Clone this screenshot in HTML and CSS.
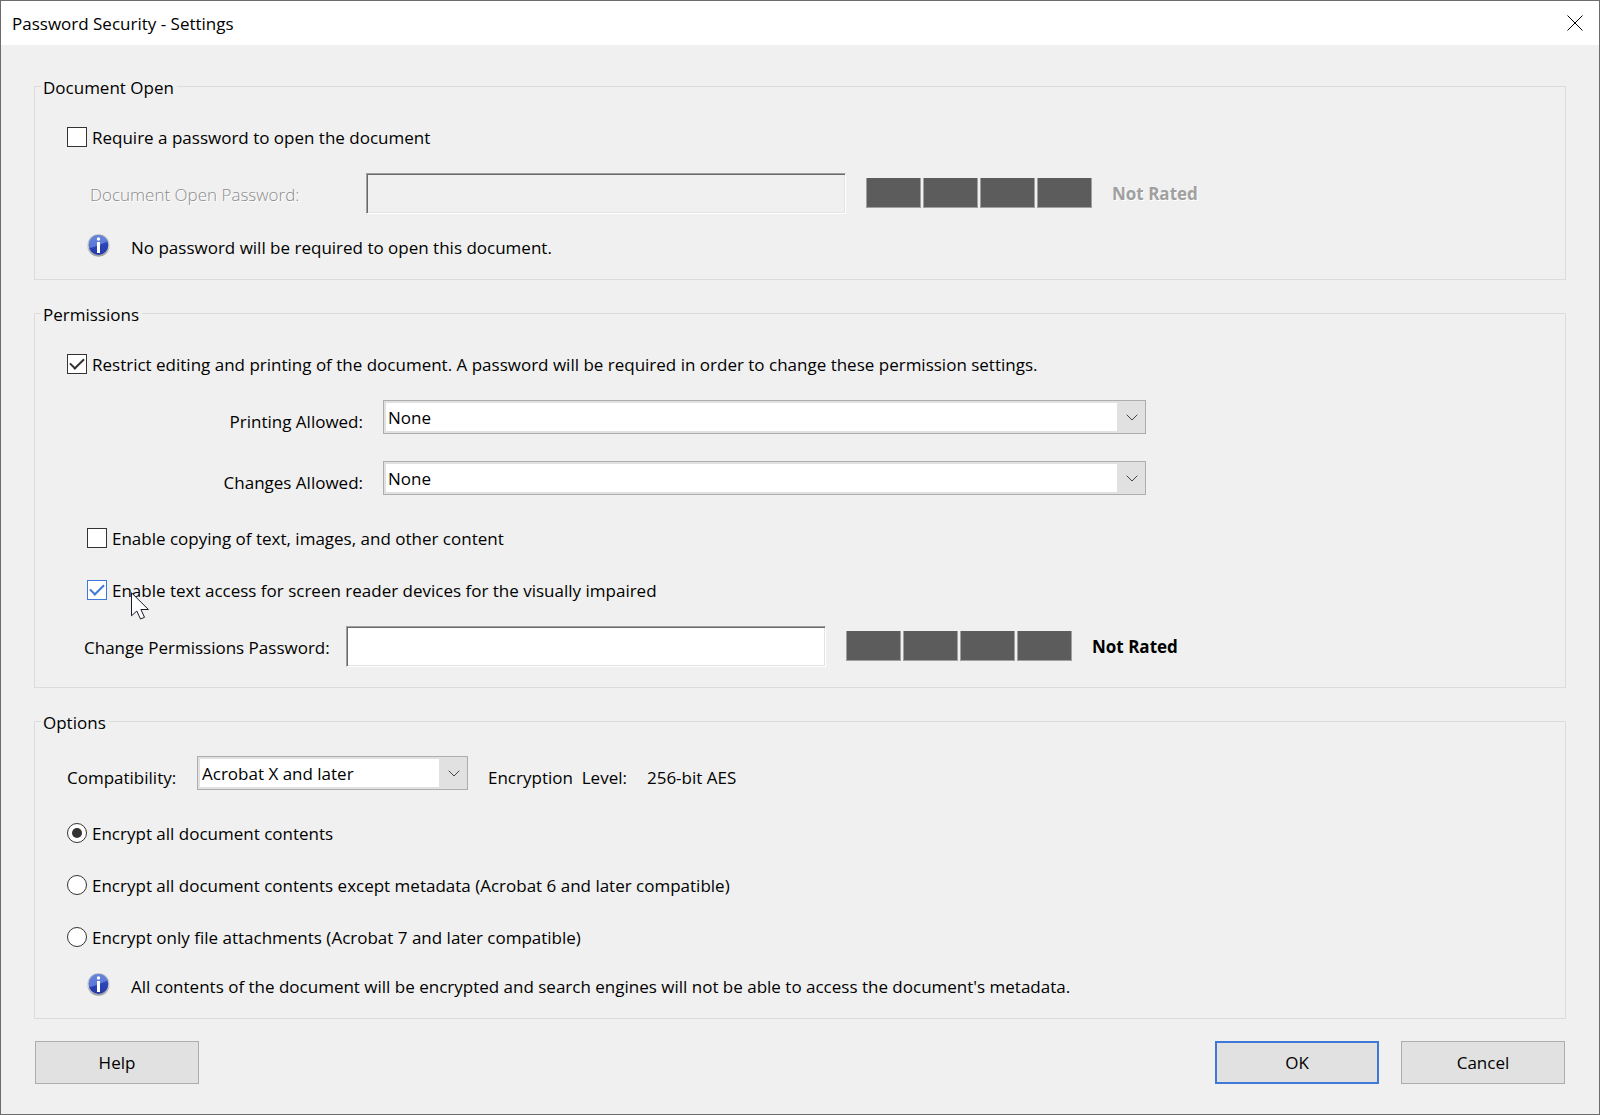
FILE: index.html
```html
<!DOCTYPE html>
<html lang="en">
<head>
    <meta charset="UTF-8">
    <meta name="viewport" content="width=device-width, initial-scale=1.0">
    <title>Password Security - Settings</title>
    <link rel="stylesheet" href="styles.css">
</head>
<body>
    <!-- shared gradients for the info icons -->
    <svg class="defs" width="0" height="0" aria-hidden="true">
        <defs>
            <linearGradient id="ring" x1="0" y1="0" x2="0" y2="1">
                <stop offset="0" stop-color="#b4b4b4"/>
                <stop offset="0.5" stop-color="#d8d8d8"/>
                <stop offset="1" stop-color="#9a9a9a"/>
            </linearGradient>
            <linearGradient id="ball" x1="0" y1="0" x2="0" y2="1">
                <stop offset="0" stop-color="#3f5fc6"/>
                <stop offset="0.5" stop-color="#2b46b4"/>
                <stop offset="1" stop-color="#2438ae"/>
            </linearGradient>
            <symbol id="info" viewBox="0 0 24 24">
                <circle cx="11.500" cy="12.500" r="11.300" fill="url(#ring)"/>
                <circle cx="11.500" cy="12" r="9.900" fill="url(#ball)"/>
                <path d="M1.900 13a9.600 9.600 0 0 1 18.600-4.500C16 10 9 14 2.600 15z" fill="#7f9cf0" opacity="0.6"/>
                <circle cx="11.500" cy="6" r="1.700" fill="#fff"/>
                <rect x="10" y="9" width="3" height="11" fill="#fff"/>
            </symbol>
        </defs>
    </svg>

    <form class="dialog">
        <header class="title-bar">
            <h1>Password Security - Settings</h1>
            <button type="button" class="close" aria-label="Close">
                <svg width="16" height="16" viewBox="0 0 16 16"><path d="M.5.5l15 15M15.500.5l-15 15" stroke="#000"/></svg>
            </button>
        </header>

        <main class="content">
            <fieldset class="group">
                <legend>Document Open</legend>
                <div class="check-row">
                    <input type="checkbox" id="requireOpen">
                    <label for="requireOpen">Require a password to open the document</label>
                </div>
                <div class="password-row open-password">
                    <label for="openPassword" class="disabled">Document Open Password:</label>
                    <input type="password" id="openPassword" disabled>
                    <div class="meter"><span></span><span></span><span></span><span></span></div>
                    <strong class="disabled">Not Rated</strong>
                </div>
                <div class="info-row">
                    <svg width="24" height="24" aria-hidden="true"><use href="#info"/></svg>
                    <p>No password will be required to open this document.</p>
                </div>
            </fieldset>

            <fieldset class="group">
                <legend>Permissions</legend>
                <div class="check-row">
                    <input type="checkbox" id="restrict" checked>
                    <label for="restrict">Restrict editing and printing of the document. A password will be required in order to change these permission settings.</label>
                </div>
                <div class="select-row allowed">
                    <label for="printing">Printing Allowed:</label>
                    <div class="select">
                        <select id="printing"><option>None</option></select>
                        <svg width="12" height="7" viewBox="0 0 12 7"><path d="M.7.7L6 6 11.300.7"/></svg>
                    </div>
                </div>
                <div class="select-row allowed">
                    <label for="changes">Changes Allowed:</label>
                    <div class="select">
                        <select id="changes"><option>None</option></select>
                        <svg width="12" height="7" viewBox="0 0 12 7"><path d="M.7.7L6 6 11.300.7"/></svg>
                    </div>
                </div>
                <div class="check-row first indent">
                    <input type="checkbox" id="copying">
                    <label for="copying">Enable copying of text, images, and other content</label>
                </div>
                <div class="check-row indent">
                    <input type="checkbox" id="reader" class="hot" checked>
                    <label for="reader">Enable text access for screen reader devices for the visually impaired</label>
                    <svg class="cursor" width="19" height="28" viewBox="0 0 19 28" aria-hidden="true">
                        <path d="M.5.8v23l5.300-4.800 3.700 8 4-1.700-3.600-7.800h7.500z" fill="#fff" stroke="#1a1a2a"/>
                    </svg>
                </div>
                <div class="password-row change-password">
                    <label for="changePassword">Change Permissions Password:</label>
                    <input type="password" id="changePassword">
                    <div class="meter"><span></span><span></span><span></span><span></span></div>
                    <strong>Not Rated</strong>
                </div>
            </fieldset>

            <fieldset class="group options">
                <legend>Options</legend>
                <div class="select-row compat">
                    <label for="compatibility">Compatibility:</label>
                    <div class="select">
                        <select id="compatibility"><option>Acrobat X and later</option></select>
                        <svg width="12" height="7" viewBox="0 0 12 7"><path d="M.7.7L6 6 11.300.7"/></svg>
                    </div>
                    <span class="level">Encryption&nbsp; Level:</span>
                    <span class="level">256-bit AES</span>
                </div>
                <div class="check-row first">
                    <input type="radio" name="encrypt" id="encryptAll" checked>
                    <label for="encryptAll">Encrypt all document contents</label>
                </div>
                <div class="check-row">
                    <input type="radio" name="encrypt" id="encryptExcept">
                    <label for="encryptExcept">Encrypt all document contents except metadata (Acrobat 6 and later compatible)</label>
                </div>
                <div class="check-row">
                    <input type="radio" name="encrypt" id="encryptFiles">
                    <label for="encryptFiles">Encrypt only file attachments (Acrobat 7 and later compatible)</label>
                </div>
                <div class="info-row">
                    <svg width="24" height="24" aria-hidden="true"><use href="#info"/></svg>
                    <p>All contents of the document will be encrypted and search engines will not be able to access the document's metadata.</p>
                </div>
            </fieldset>
        </main>

        <footer class="buttons">
            <button type="button">Help</button>
            <button type="submit" class="default">OK</button>
            <button type="button">Cancel</button>
        </footer>
    </form>
</body>
</html>
```
FILE: styles.css
```css
* {
    box-sizing: border-box;
}
body {
    margin: 0;
    font-family: "Segoe UI", "Open Sans", "Noto Sans", sans-serif;
    font-size: 17px;
    line-height: 22px;
    color: #000;
    background-color: #f0f0f0;
}
input, select, button {
    font: inherit;
    color: inherit;
    margin: 0;
}
label, p, h1 {
    margin: 0;
    padding-top: 2px;
}
.defs {
    position: absolute;
}
.dialog {
    min-height: 100vh;
    border: 1px solid #6c6c6c;
}

/* title bar */
.title-bar {
    display: flex;
    align-items: center;
    justify-content: space-between;
    height: 44px;
    padding: 0 16px 0 11px;
    background-color: #fff;
}
h1 {
    font-size: 17px;
    font-weight: normal;
}
.close {
    display: flex;
    padding: 0;
    border: none;
    background: none;
}

/* groups */
.content {
    display: flex;
    flex-direction: column;
    gap: 21px;
    padding: 29px 33px 0;
}
.group {
    min-width: 0;
    margin: 0;
    padding: 26px 32px 20px;
    border: 1px solid #dcdcdc;
}
.group.options {
    padding-top: 22px;
}
legend {
    margin-left: -26px;
    padding: 3px 3px 0 2px;
}

/* check boxes and radio buttons */
.check-row {
    position: relative;
    display: flex;
    align-items: center;
    gap: 5px;
}
.check-row + .check-row {
    margin-top: 28px;
}
.select-row + .check-row.first {
    margin-top: 31px;
}
.check-row.indent {
    margin-left: 20px;
}
.check-row input {
    appearance: none;
    display: grid;
    place-items: center;
    flex: none;
    width: 20px;
    height: 20px;
    border: 1px solid #333;
    background-color: #fff;
}
.check-row input[type="checkbox"]:checked::before {
    content: "";
    width: 12px;
    height: 6px;
    margin-bottom: 4px;
    border: solid #333;
    border-width: 0 0 2px 2px;
    transform: rotate(-45deg);
}
.check-row input.hot,
.check-row input.hot:checked::before {
    border-color: #4078d8;
}
.check-row input[type="radio"] {
    border-radius: 50%;
}
.check-row input[type="radio"]:checked::before {
    content: "";
    width: 10px;
    height: 10px;
    border-radius: 50%;
    background-color: #333;
}
.cursor {
    position: absolute;
    left: 44px;
    top: 14px;
}

/* password fields */
.password-row {
    display: flex;
    align-items: center;
    gap: 20px;
    margin-top: 24px;
}
.password-row label {
    flex: none;
    white-space: nowrap;
}
.open-password {
    margin-left: 23px;
}
.open-password label {
    width: 256px;
}
.change-password {
    margin-left: 17px;
}
.change-password label {
    width: 242px;
}
.password-row input {
    flex: 0 1 480px;
    min-width: 0;
    height: 41px;
    padding: 4px 6px;
    border: 1px solid;
    border-color: #a0a0a0 #fff #fff #a0a0a0;
    box-shadow: inset 1px 1px #696969, inset -1px -1px #e3e3e3;
    background-color: #fff;
}
.password-row input:disabled {
    background-color: #f0f0f0;
}
.disabled {
    color: #a0a0a0;
    text-shadow: 1px 1px #fff;
}
label.disabled {
    color: #8c8c8c;
    font-weight: 300;
}
.meter {
    display: flex;
    gap: 2px;
    margin-bottom: 2px;
}
.meter span {
    width: 55px;
    height: 30px;
    border: solid #a0a0a0;
    border-width: 0 1px 1px;
    background-color: #5c5c5c;
}

/* drop-downs */
.select-row {
    display: flex;
    align-items: center;
    gap: 20px;
}
.allowed {
    margin-top: 24px;
}
.allowed + .allowed {
    margin-top: 27px;
}
.select-row label,
.level {
    flex: none;
    line-height: 24px;
    padding-top: 10px;
}
.allowed label {
    width: 296px;
    text-align: right;
}
.compat label {
    width: 110px;
}
.select {
    display: grid;
    align-items: center;
    height: 34px;
}
.allowed .select {
    flex: 0 1 763px;
}
.compat .select {
    flex: 0 1 271px;
}
.select select,
.select svg {
    grid-area: 1 / 1;
}
.select select {
    appearance: none;
    width: 100%;
    height: 34px;
    padding: 1px 30px 0 4px;
    border: 1px solid #adadad;
    border-radius: 0;
    background: linear-gradient(#fff, #fff) 2px 2px / calc(100% - 30px) calc(100% - 4px) no-repeat #e1e1e1;
}
.select svg {
    justify-self: end;
    margin-right: 8px;
    fill: none;
    stroke: #444;
    pointer-events: none;
}

/* info lines */
.info-row {
    display: flex;
    align-items: flex-end;
    gap: 20px;
    height: 24px;
    margin: 21px 0 0 20px;
}
.options .info-row {
    margin-top: 25px;
}
.info-row svg {
    flex: none;
    margin-bottom: 2px;
}

/* bottom buttons */
.buttons {
    display: flex;
    gap: 22px;
    padding: 22px 34px 29px;
}
.buttons button {
    width: 164px;
    height: 43px;
    padding-top: 2px;
    border: 1px solid #adadad;
    background-color: #e1e1e1;
}
.buttons button.default {
    margin-left: auto;
    border: 2px solid #4078d8;
}
```
